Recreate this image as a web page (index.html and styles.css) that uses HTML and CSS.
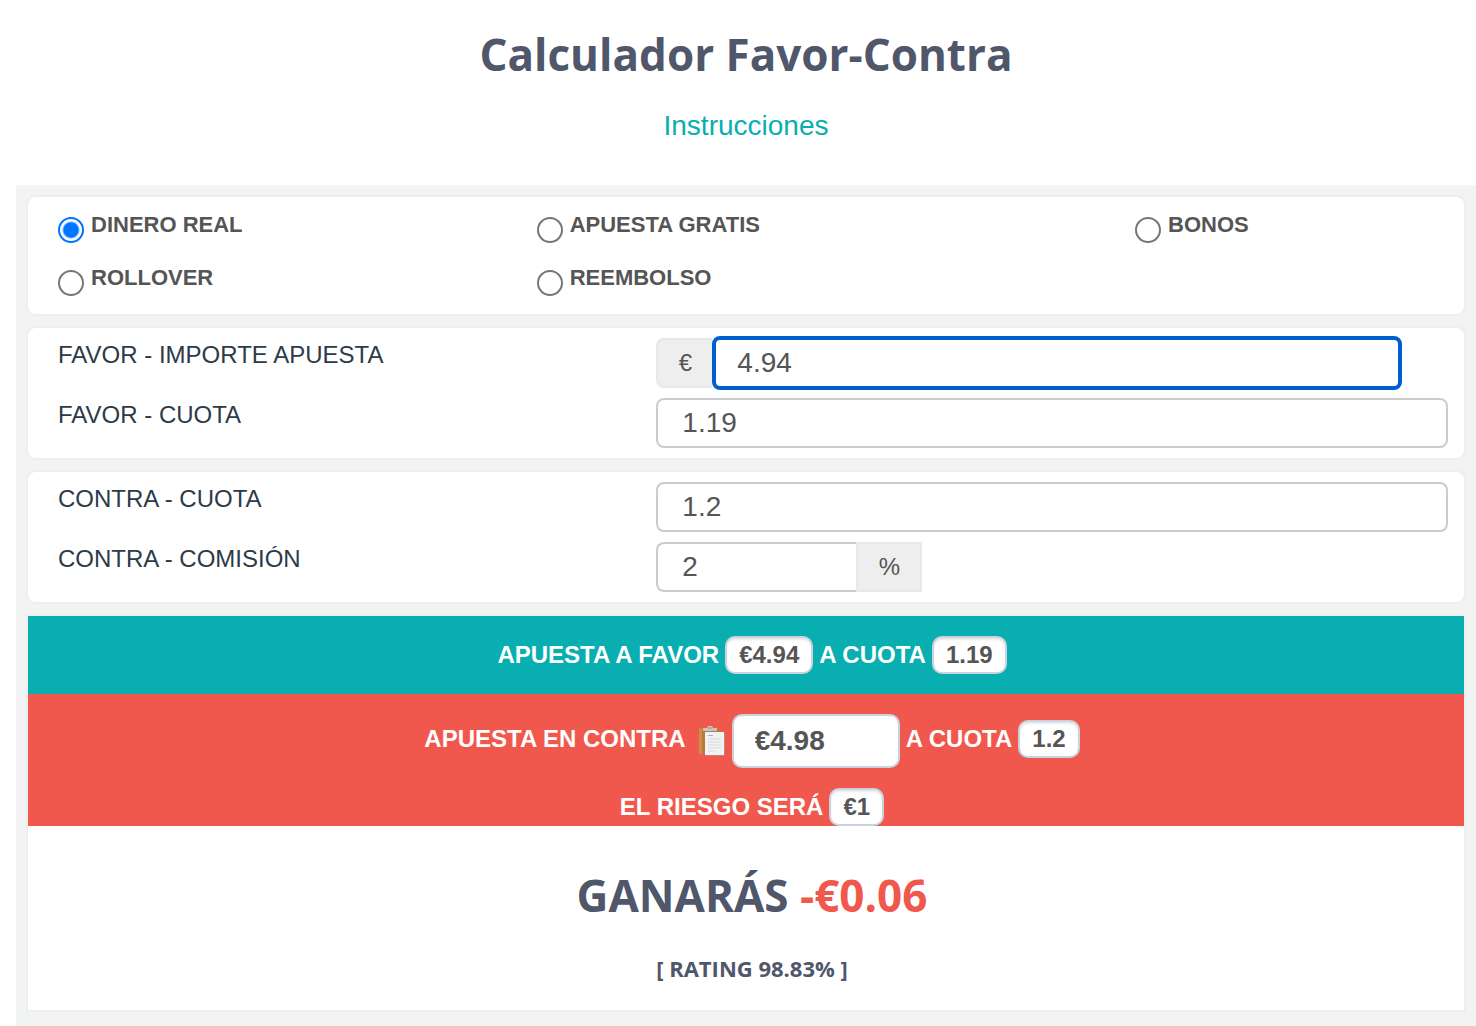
FILE: index.html
```html
<!DOCTYPE html>
<html lang="es">
<head>
    <meta charset="UTF-8">
    <meta name="viewport" content="width=device-width, initial-scale=1.0">
    <title>Calculador Favor-Contra</title>
    <link rel="stylesheet" href="styles.css">
</head>
<body>
    <h1 class="title">Calculador Favor-Contra</h1>
    <p class="help"><a href="#">Instrucciones</a></p>

    <form class="calculator">
        <div class="panel types">
            <label class="type"><input type="radio" name="type" checked><span>DINERO REAL</span></label>
            <label class="type"><input type="radio" name="type"><span>APUESTA GRATIS</span></label>
            <label class="type"><input type="radio" name="type"><span>BONOS</span></label>
            <label class="type"><input type="radio" name="type"><span>ROLLOVER</span></label>
            <label class="type"><input type="radio" name="type"><span>REEMBOLSO</span></label>
        </div>

        <div class="panel fields">
            <div class="field">
                <label for="stake">FAVOR - IMPORTE APUESTA</label>
                <div class="group money">
                    <span class="addon left">€</span>
                    <input type="text" class="control active" id="stake" value="4.94">
                </div>
            </div>
            <div class="field">
                <label for="backodds">FAVOR - CUOTA</label>
                <div class="group">
                    <input type="text" class="control" id="backodds" value="1.19">
                </div>
            </div>
        </div>

        <div class="panel fields">
            <div class="field">
                <label for="layodds">CONTRA - CUOTA</label>
                <div class="group">
                    <input type="text" class="control" id="layodds" value="1.2">
                </div>
            </div>
            <div class="field">
                <label for="commission">CONTRA - COMISIÓN</label>
                <div class="group">
                    <input type="text" class="control commission" id="commission" value="2">
                    <span class="addon right">%</span>
                </div>
            </div>
        </div>

        <div class="results">
            <div class="back line">
                <span>APUESTA A FAVOR</span>
                <span class="badge">€4.94</span>
                <span>A CUOTA</span>
                <span class="badge">1.19</span>
            </div>
            <div class="lay">
                <div class="line stakeline">
                    <label for="laystake">APUESTA EN CONTRA</label>
                    <button type="button" class="copy" aria-label="Copiar">
                        <svg width="28" height="32" viewBox="0 0 28 32">
                            <rect x="1" y="3" width="21" height="26" rx="1" fill="#b97b35"/>
                            <rect x="1" y="3" width="3" height="26" rx="1" fill="#c98f4b"/>
                            <path d="M5 6V3h4l1-2h4l1 2h4v3z" fill="#c9c4bc"/>
                            <path d="M10 3h4" stroke="#8f9294" stroke-width="1"/>
                            <rect x="7" y="8" width="20" height="23" fill="#a3a3a3" opacity=".5"/>
                            <rect x="7" y="7" width="19" height="23" fill="#f1f2f4"/>
                            <path d="M10 10.500h5" stroke="#9db0cc" stroke-width="1"/>
                            <path d="M10 14h13M10 17h13M10 20h13M10 23h13M10 26h8" stroke="#d8dade" stroke-width="1"/>
                        </svg>
                    </button>
                    <input type="text" class="laystake" id="laystake" value="€4.98" readonly>
                    <span>A CUOTA</span>
                    <span class="badge">1.2</span>
                </div>
                <div class="line">
                    <span>EL RIESGO SERÁ</span>
                    <span class="badge">€1</span>
                </div>
            </div>
            <div class="profit">
                <h2>GANARÁS <span class="loss">-€0.06</span></h2>
                <h3>[ RATING 98.83% ]</h3>
            </div>
        </div>
    </form>
</body>
</html>
```
FILE: styles.css
```css
* {
    box-sizing: border-box;
}
body {
    margin: 0;
    padding-left: 16px;
    font-family: "Liberation Sans", Arial, sans-serif;
    font-size: 24px;
    color: #555;
    background: #fff;
}
h1, h2, h3 {
    margin: 0;
    font-family: "Open Sans", sans-serif;
    font-weight: 700;
    color: #50576b;
    text-align: center;
}
.title {
    padding-top: 24px;
    font-size: 44px;
    line-height: 60px;
}
.help {
    margin: 24px 0 41px;
    font-size: 28px;
    line-height: 36px;
    text-align: center;
}
.help a {
    color: #08aeb0;
    text-decoration: none;
}
.calculator {
    padding: 10px 10px 14px;
    background: #f2f4f4;
}
.panel {
    margin-bottom: 10px;
    border: 2px solid #eee;
    border-radius: 10px;
    background: #fff;
}

/* bet type */
.types {
    display: grid;
    grid-template-columns: 4fr 5fr 3fr;
    padding: 11px 0 0;
}
.type {
    display: flex;
    align-items: flex-start;
    gap: 7px;
    height: 53px;
    padding-left: 30px;
    font-size: 22px;
    line-height: 34px;
    font-weight: bold;
}
.type input {
    width: 26px;
    height: 26px;
    margin: 9px 0 0;
    appearance: none;
    border: 2px solid #767676;
    border-radius: 50%;
    background: #fff;
}
.type input:checked {
    border-color: #0075ff;
    background: radial-gradient(circle, #0075ff 7px, #fff 9px);
}

/* fields */
.fields {
    padding: 10px 0;
}
.field {
    display: grid;
    grid-template-columns: 5fr 7fr;
    color: #2d3a48;
}
.field + .field {
    margin-top: 10px;
}
.field label {
    padding-left: 30px;
    line-height: 34px;
}
.group {
    display: flex;
    align-items: center;
    height: 50px;
    padding: 0 16px 0 30px;
}
.money {
    padding-right: 62px;
}
.control {
    flex: 1;
    min-width: 0;
    height: 50px;
    padding: 0 24px;
    border: 2px solid #ccc;
    border-radius: 8px;
    font: 28px "Liberation Sans", Arial, sans-serif;
    color: #555;
    outline: none;
}
.active {
    height: 54px;
    padding: 0 21px;
    border: 4px solid #005fd0;
}
.commission {
    flex: 0 0 200px;
    border-right: 0;
    border-radius: 8px 0 0 8px;
}
.addon {
    display: flex;
    align-items: center;
    justify-content: center;
    height: 50px;
    border: 2px solid #e8e8e8;
    background: #eee;
    color: #555;
}
.left {
    width: 56px;
    border-right: 0;
    border-radius: 8px 0 0 8px;
}
.right {
    width: 66px;
}

/* results */
.results {
    border: 2px solid #eee;
    background: #fff;
}
.line {
    display: flex;
    justify-content: center;
    gap: 6px;
    padding-left: 12px;
    line-height: 38px;
    font-weight: bold;
    color: #fff;
}
.back {
    padding-top: 20px;
    padding-bottom: 20px;
    background: #08aeb0;
}
.lay {
    padding-top: 20px;
    background: #f1584d;
}
.lay .line {
    align-items: center;
}
.lay .line + .line {
    margin-top: 20px;
}
.stakeline label,
.stakeline span {
    margin-bottom: 4px;
}
.badge {
    height: 38px;
    padding: 0 12px;
    border: 2px solid #c9d3df;
    border-radius: 10px;
    line-height: 34px;
    color: #555;
    background: #fff;
    box-shadow: inset 0 2px 2px #e8e8e8;
}
.copy {
    display: flex;
    margin-left: 6px;
    padding: 0;
    border: 0;
    background: none;
}
.laystake {
    width: 168px;
    height: 54px;
    padding: 0 21px;
    border: 2px solid #c9d3df;
    border-radius: 10px;
    font: bold 28px "Liberation Sans", Arial, sans-serif;
    color: #555;
    background: #fff;
}
.profit {
    padding: 39px 0 26px 12px;
}
.profit h2 {
    font-size: 44px;
    line-height: 60px;
}
.profit h3 {
    margin-top: 27px;
    font-size: 22px;
    line-height: 32px;
}
.loss {
    color: #f1584d;
}
```
